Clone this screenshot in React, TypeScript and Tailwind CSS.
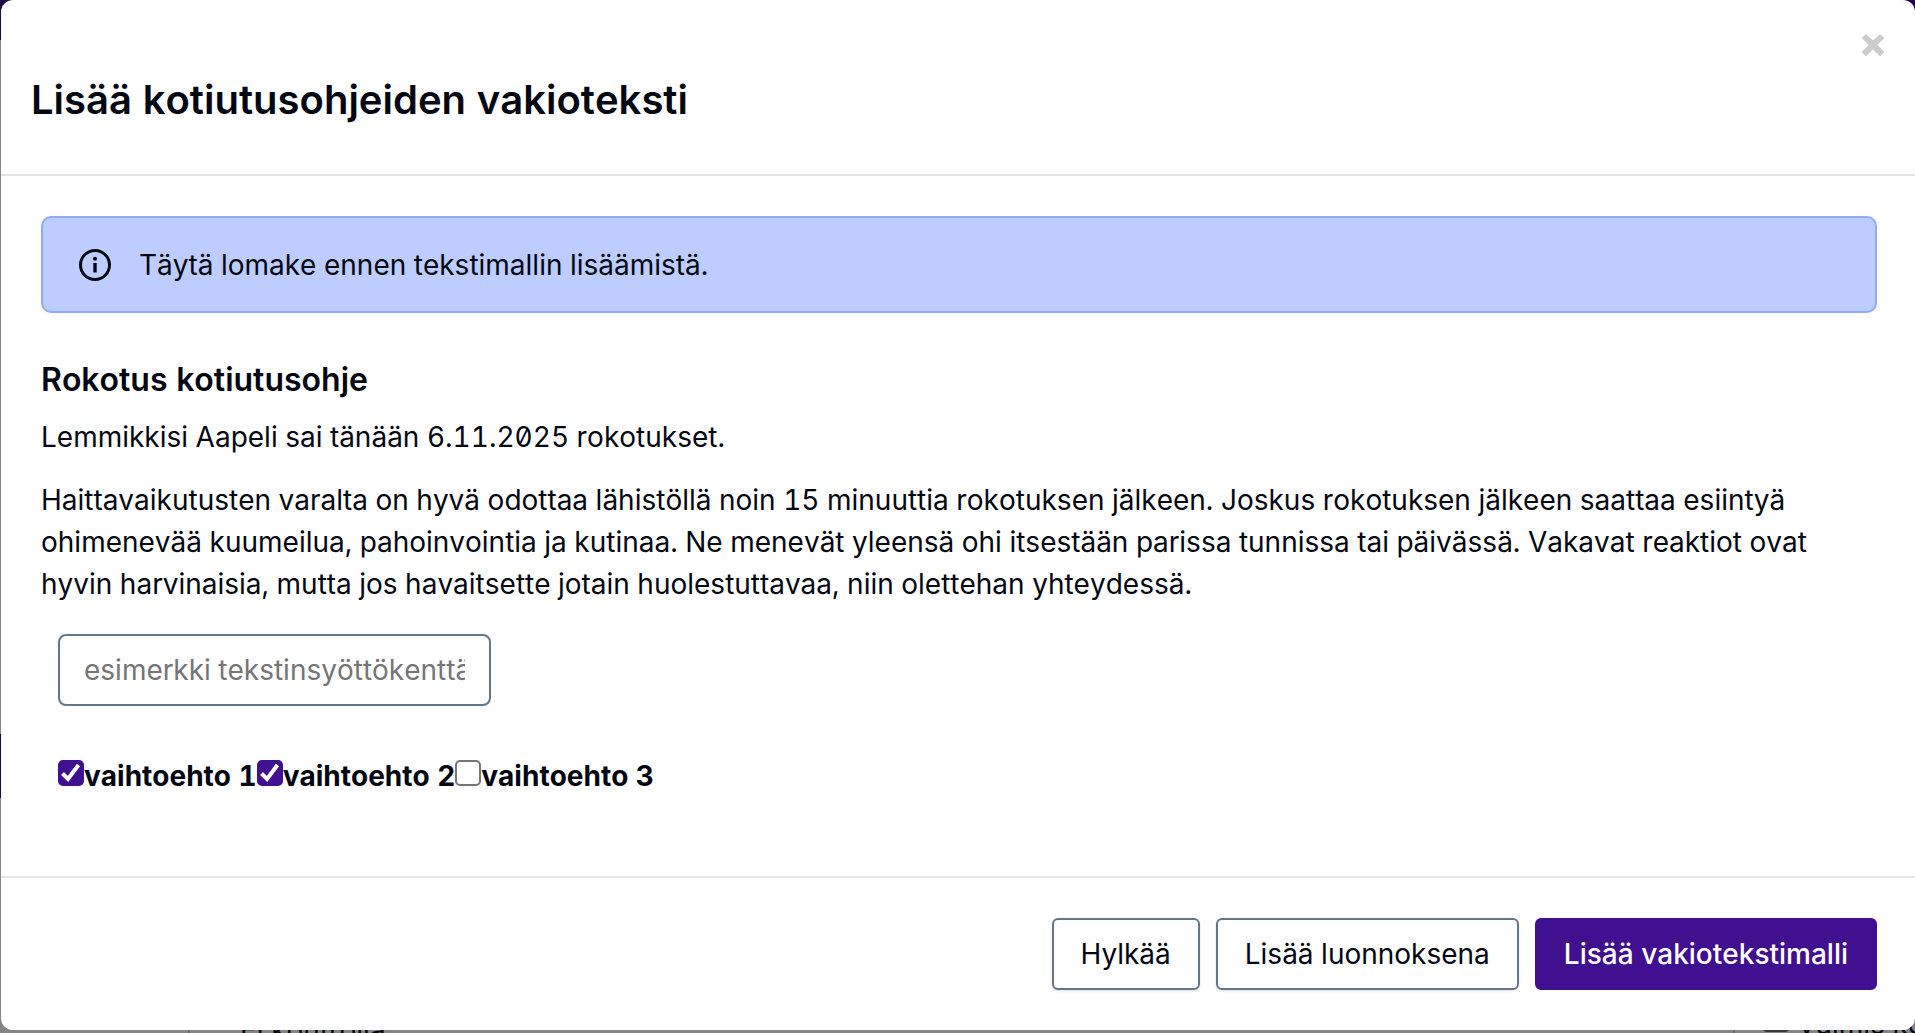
import React, { useState } from 'react';

const OPTIONS = [
  { id: 'option-1', label: 'vaihtoehto 1', checked: true },
  { id: 'option-2', label: 'vaihtoehto 2', checked: true },
  { id: 'option-3', label: 'vaihtoehto 3', checked: false },
];

const InfoIcon: React.FC = () => (
  <svg className="w-8 h-8 shrink-0" viewBox="0 0 32 32" fill="none" aria-hidden="true">
    <circle cx="16" cy="16" r="14.5" stroke="currentColor" strokeWidth="3" />
    <circle cx="16" cy="9.8" r="2" fill="currentColor" />
    <path d="M16 14v9.5" stroke="currentColor" strokeWidth="3.4" />
  </svg>
);

const CloseIcon: React.FC = () => (
  <svg className="w-[22px] h-[22px]" viewBox="0 0 22 22" aria-hidden="true">
    <path
      d="M4 1 11 7.6 18 1 21.4 4 14.4 11 21.4 18 18 21.4 11 14.4 4 21.4.6 18 7.6 11 .6 4Z"
      fill="#cccccc"
      stroke="#cccccc"
      strokeWidth="1.4"
      strokeLinejoin="round"
    />
  </svg>
);

// Dimmed page behind the dialog
const Backdrop: React.FC = () => (
  <div aria-hidden="true" className="absolute inset-0 flex flex-col overflow-hidden bg-[#858585]">
    <div className="h-10 bg-[#200848]" />
    <div className="flex-1" />
    <div className="w-10 h-16 bg-[#200848]" />
    <div className="h-[208px]" />
    <div className="flex h-[27px] pl-[188px]">
      <div className="flex-1 h-12 pl-[50px] border-x-2 border-[#6a6a6a] leading-[48px] whitespace-nowrap">Ei kontrolia.</div>
      <div className="ml-7 w-[26px] h-[26px] border-2 border-[#3a3a3a] rounded" />
      <div className="ml-2 w-[118px] leading-9 whitespace-nowrap">Valmis ko</div>
    </div>
  </div>
);

const App: React.FC = () => {
  const [values, setValues] = useState(OPTIONS.map((option) => option.checked));
  const [text, setText] = useState('');

  const toggle = (index: number) => {
    setValues(values.map((value, i) => (i === index ? !value : value)));
  };

  return (
    <div className="relative min-h-screen pl-px pb-[3px] flex flex-col font-[Inter,sans-serif] text-[28px] leading-[42px] text-[#030712] tabular-nums slashed-zero [font-kerning:none]">
      <Backdrop />
      <div role="dialog" aria-labelledby="dialog-title" className="relative flex-1 flex flex-col bg-white rounded-xl">
        {/* Header */}
        <header className="flex items-start justify-between pl-[30px] pr-[31px] pt-[34px] pb-[46px] border-b-2 border-[#e5e5e5]">
          <h1 id="dialog-title" className="pt-[38px] text-[40px] leading-[56px] font-semibold">
            Lisää kotiutusohjeiden vakioteksti
          </h1>
          <button type="button" aria-label="Sulje">
            <CloseIcon />
          </button>
        </header>

        {/* Body */}
        <main className="flex-1 pl-10 pr-[38px] pt-10">
          <div role="status" className="flex items-center gap-7 h-[97px] pl-[36px] bg-[#bdcdff] border-2 border-[#8eabff] rounded-[10px]">
            <InfoIcon />
            <p>Täytä lomake ennen tekstimallin lisäämistä.</p>
          </div>

          <h2 className="mt-[43px] text-[32px] leading-[48px] font-semibold">Rokotus kotiutusohje</h2>
          <p className="mt-3">Lemmikkisi Aapeli sai tänään 6.11.2025 rokotukset.</p>
          <p className="mt-[21px]">
            Haittavaikutusten varalta on hyvä odottaa lähistöllä noin 15 minuuttia rokotuksen jälkeen. Joskus rokotuksen jälkeen saattaa esiintyä ohimenevää kuumeilua, pahoinvointia ja kutinaa. Ne menevät yleensä ohi itsestään parissa tunnissa tai päivässä. Vakavat reaktiot ovat hyvin harvinaisia, mutta jos havaitsette jotain huolestuttavaa, niin olettehan yhteydessä.
          </p>

          <div className="pl-[17px] mt-[29px]">
            <input
              type="text"
              aria-label="esimerkki tekstinsyöttökenttä"
              placeholder="esimerkki tekstinsyöttökenttä"
              value={text}
              onChange={(e) => setText(e.target.value)}
              className="block w-[433px] h-[72px] px-6 border-2 border-[#647788] rounded-lg placeholder:text-[#757575]"
            />
            <div className="flex mt-[49px] font-bold">
              {OPTIONS.map((option, index) => (
                <div key={option.id} className="flex">
                  <span className="relative mt-[5px] w-[26px] h-[26px]">
                    <input
                      id={option.id}
                      type="checkbox"
                      checked={values[index]}
                      onChange={() => toggle(index)}
                      className="peer block appearance-none w-[26px] h-[26px] bg-white border-2 border-[#767676] rounded-[5px] checked:bg-[#401090] checked:border-[#401090]"
                    />
                    <svg className="absolute inset-0 hidden peer-checked:block pointer-events-none" viewBox="0 0 26 26" fill="none">
                      <path d="M4.5 13.5 10 19 20.5 5" stroke="white" strokeWidth="4" />
                    </svg>
                  </span>
                  <label htmlFor={option.id}>{option.label}</label>
                </div>
              ))}
            </div>
          </div>
        </main>

        {/* Footer */}
        <footer className="flex justify-end gap-4 pt-10 pb-10 pr-[38px] border-t-2 border-[#e5e5e5]">
          <button type="button" className="h-[72px] px-[27px] bg-white border-2 border-[#647788] rounded-md shadow-sm">
            Hylkää
          </button>
          <button type="button" className="h-[72px] px-[27px] bg-white border-2 border-[#647788] rounded-md shadow-sm">
            Lisää luonnoksena
          </button>
          <button type="button" className="h-[72px] px-[27px] bg-[#401090] border-2 border-[#401090] rounded-md font-medium text-white">
            Lisää vakiotekstimalli
          </button>
        </footer>
      </div>
    </div>
  );
};

export default App;
